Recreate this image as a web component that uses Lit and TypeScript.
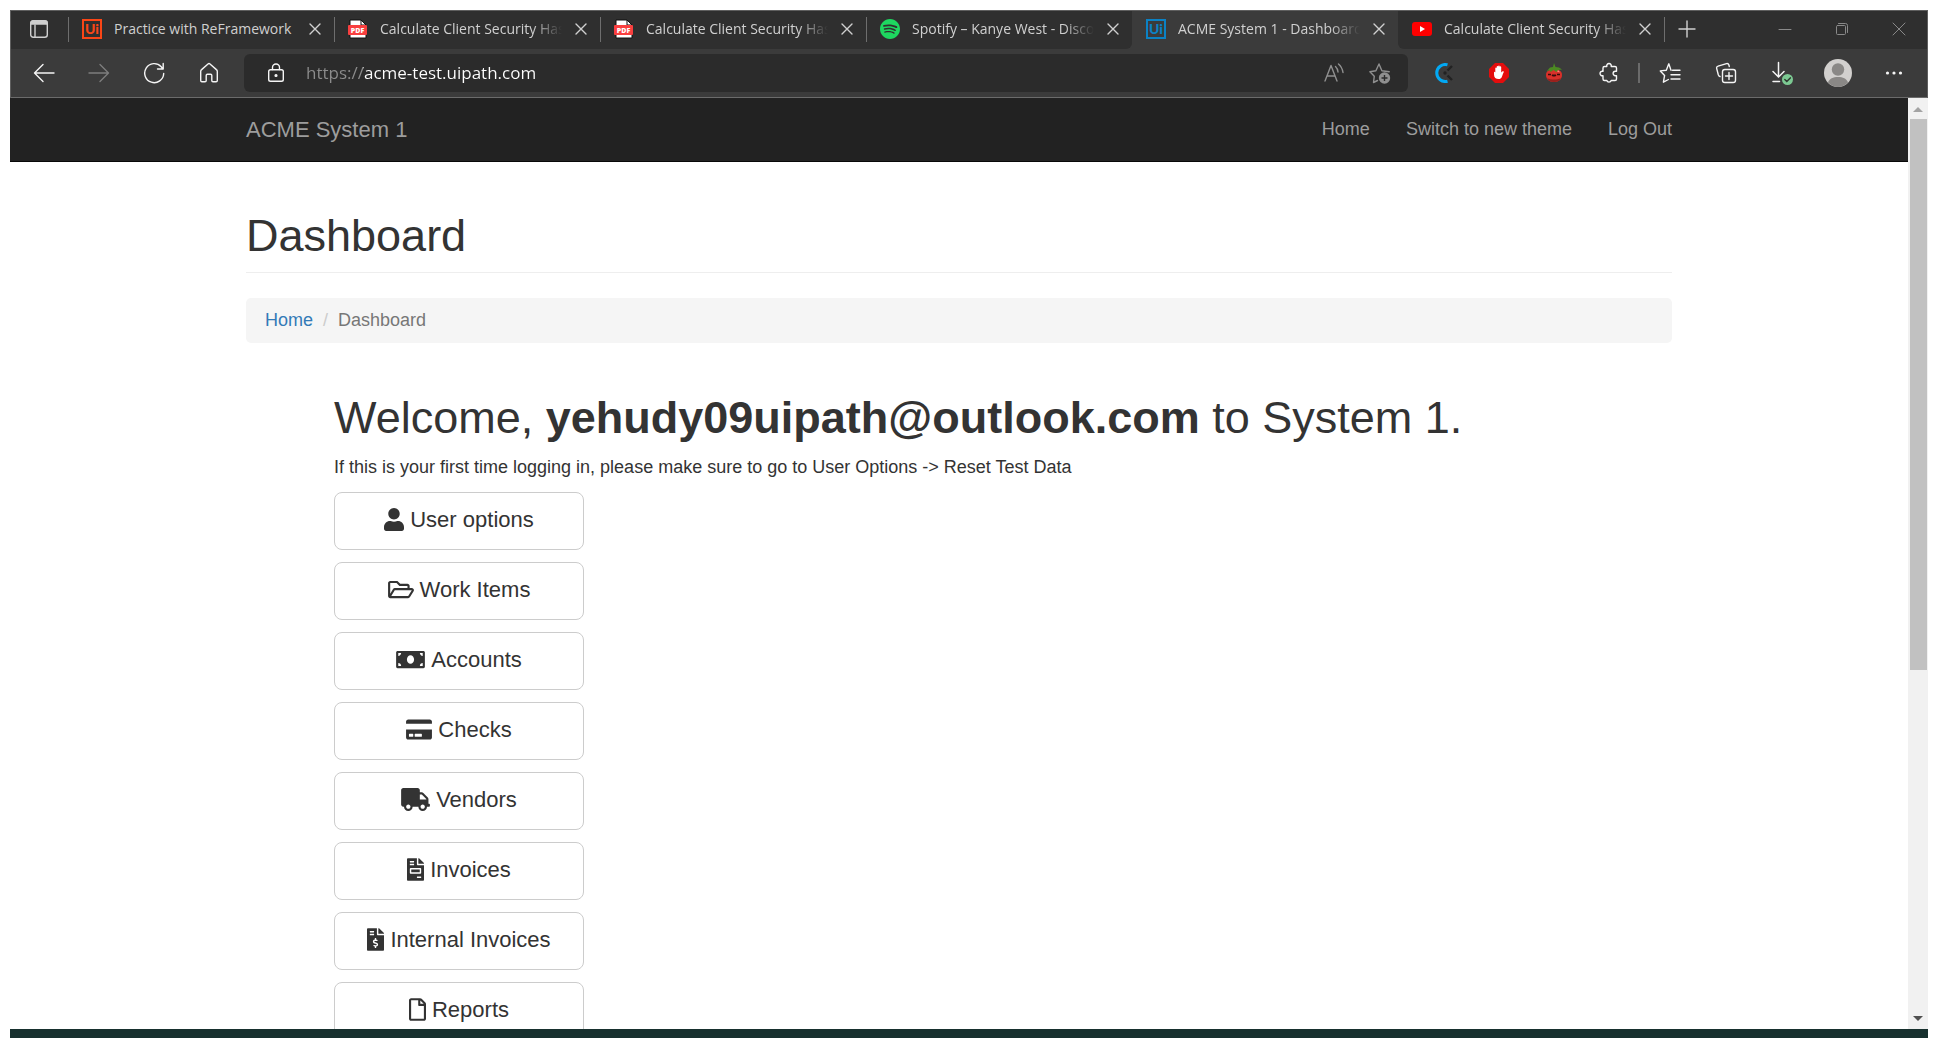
import { LitElement, html, css, svg, nothing, type TemplateResult } from "lit";
import { customElement, property } from "lit/decorators.js";
import { classMap } from "lit/directives/class-map.js";

/* ---------- favicons ---------- */

const uiLogo = (color: string) => html`
  <svg width="20" height="20" viewBox="0 0 20 20" aria-hidden="true">
    <rect x="1" y="1" width="18" height="18" fill="none" stroke=${color} stroke-width="2" />
    <text x="10" y="15" text-anchor="middle" font-family="Lato, sans-serif" font-weight="900" font-size="14" fill=${color}>Ui</text>
  </svg>
`;

const pdfLogo = html`
  <svg width="20" height="20" viewBox="0 0 20 20" aria-hidden="true">
    <path d="M2 1h11l5 5v13H2z" fill="#fff" stroke="#111" />
    <path d="M13 1v5h5z" fill="#fff" stroke="#111" />
    <rect x="0" y="6" width="19" height="10" rx="1" fill="#f93f3f" />
    <text x="9.5" y="14" text-anchor="middle" font-family="Open Sans, sans-serif" font-weight="800" font-size="7" fill="#fff">PDF</text>
  </svg>
`;

const spotifyLogo = html`
  <svg width="20" height="20" viewBox="0 0 24 24" aria-hidden="true">
    <path fill="#1ed760" d="M12 0C5.4 0 0 5.4 0 12s5.4 12 12 12 12-5.4 12-12S18.66 0 12 0zm5.521 17.34c-.24.359-.66.48-1.021.24-2.82-1.74-6.36-2.101-10.561-1.141-.418.122-.779-.179-.899-.539-.12-.421.18-.78.54-.9 4.56-1.021 8.52-.6 11.64 1.32.42.18.479.659.301 1.02zm1.44-3.3c-.301.42-.841.6-1.262.3-3.239-1.98-8.159-2.58-11.939-1.38-.479.12-1.02-.12-1.14-.6-.12-.48.12-1.021.6-1.141C9.6 9.9 15 10.561 18.72 12.84c.361.181.54.78.241 1.2zm.12-3.36C15.24 8.4 8.82 8.16 5.16 9.301c-.6.179-1.2-.181-1.38-.721-.18-.601.18-1.2.72-1.381 4.26-1.26 11.28-1.02 15.721 1.621.539.3.719 1.02.419 1.56-.299.421-1.02.599-1.559.3z" />
  </svg>
`;

const youtubeLogo = html`
  <svg width="20" height="20" viewBox="0 0 20 20" aria-hidden="true">
    <rect x="0" y="3" width="20" height="14" rx="3" fill="#f00" />
    <path d="M8 7l5 3-5 3z" fill="#fff" />
  </svg>
`;

/* ---------- toolbar icons, drawn with strokes ---------- */

const stroke = (size: number, body: TemplateResult) => html`
  <svg width=${size} height=${size} viewBox="0 0 ${size} ${size}" fill="none" stroke="currentColor"
    stroke-width="1.4" stroke-linecap="round" stroke-linejoin="round" aria-hidden="true">${body}</svg>
`;

const closeIcon = stroke(12, svg`<path d="M1 1l10 10M11 1L1 11" />`);
const tabActionsIcon = stroke(20, svg`
  <rect x="1.7" y="1.7" width="16.6" height="16.6" rx="2.5" />
  <path d="M2 5V4a2 2 0 0 1 2-2h12a2 2 0 0 1 2 2v1z" fill="currentColor" /><path d="M6 6v12" />`);
const plusIcon = stroke(18, svg`<path d="M9 1v16M1 9h16" />`);
const backIcon = stroke(22, svg`<path d="M21 11H2M10 2.5L1.5 11l8.500 8.500" />`);
const forwardIcon = stroke(22, svg`<path d="M1 11h19M12 2.500L20.500 11 12 19.500" />`);
const refreshIcon = stroke(22, svg`<path d="M20.700 11.500A9.500 9.500 0 1 1 18.200 4.700l1.800 2.300M20.200 1.500V7H14.500" />`);
const homeIcon = stroke(22, svg`
  <path d="M2.700 9.500c0-.8.3-1.400.9-1.900L10 2c.6-.5 1.400-.5 2 0l6.400 5.600c.6.500.9 1.100.9 1.900v9c0 .8-.5 1.300-1.300 1.300h-3c-.7 0-1.200-.5-1.200-1.200V13.500c0-.7-.5-1.200-1.200-1.200h-3.200c-.7 0-1.200.5-1.200 1.200v5.100c0 .7-.5 1.200-1.200 1.200H4c-.8 0-1.300-.5-1.300-1.300z" />`);
const lockIcon = stroke(20, svg`
  <rect x="2.700" y="6.700" width="14.600" height="11.600" rx="1.800" />
  <path d="M6.500 6.500V4.500a3.500 3.500 0 0 1 7 0v2" /><circle cx="10" cy="12.500" r=".9" fill="currentColor" />`);
const readAloudIcon = stroke(22, svg`
  <path d="M2 19L8 3.500 14 19M4 14h8M12.500 4.500c1.500 1.400 2.300 3.200 2.500 5.500M15.500 2c2.500 2.200 4 5 4.500 8.500" />`);
const addFavoriteIcon = html`
  <svg width="22" height="22" viewBox="0 0 22 22" fill="none" stroke="currentColor" stroke-width="1.4" stroke-linejoin="round" aria-hidden="true">
    <path d="M8.500 18.500l-4 2 .8-6.300-4.400-4.500 6-1L10 2l2.900 6.700 7.300 1" stroke-linecap="round" />
    <circle cx="15.500" cy="16" r="5.700" fill="currentColor" stroke="none" />
    <path d="M15.500 13v6M12.500 16h6" stroke="#2b2b2b" />
  </svg>
`;
const clockifyIcon = html`
  <svg width="20" height="20" viewBox="0 0 20 20" fill="none" aria-hidden="true">
    <path d="M13.500 1.800A8.500 8.500 0 1 0 13.500 18.200" stroke="#03a9f4" stroke-width="3" />
    <circle cx="11" cy="10" r="1.700" fill="#222" />
    <path d="M13.500 7.500l4.500-4.500M13.500 12.500l4.500 4.500" stroke="#222" stroke-width="2.400" />
  </svg>
`;
const blockerIcon = html`
  <svg width="20" height="20" viewBox="0 0 20 20" aria-hidden="true">
    <path d="M6 0h8l6 6v8l-6 6H6l-6-6V6z" fill="#e40d0d" />
    <path d="M5 9.500c0-1 1.200-1 1.300 0V5.200c0-1 1.400-1 1.400 0V3.700c0-1 1.500-1 1.500 0v-.4c0-1 1.500-1 1.500 0v.8c0-1 1.500-1 1.500 0v5.400l1-.9c.8-.8 2-.2 1.500.7-1 1.700-1.200 3.500-2 4.900-.6 1.200-1.500 1.800-3 1.800-3 0-4.700-1.300-4.700-4.500z" fill="#fff" />
  </svg>
`;
const tomatoIcon = html`
  <svg width="20" height="20" viewBox="0 0 20 20" aria-hidden="true">
    <path d="M2 12c0-4 3-5.500 8-5.500s8 1.500 8 5.500-3 7-8 7-8-3-8-7z" fill="#d9302a" />
    <path d="M3 15c1.500 3 4 4 7 4s5.500-1 7-4c-4 2-10 2-14 0z" fill="#99201c" />
    <path d="M2.500 8.500L6 4.500l3-.5 1-4 1.500 4 3.500.5 3 2-4 .5-1.500 2-3-2-3 2-1-2z" fill="#4c8a22" />
    <path d="M12.500 8l2.500-.5.500 2z" fill="#ff8d80" />
    <path d="M4 11.500h3M8 13l1-1 1 1 1-1 1 1M13 11.500h3" stroke="#3a0d0b" stroke-width="1.300" fill="none" />
  </svg>
`;
const puzzleIcon = stroke(22, svg`
  <path d="M6.500 4.500h2.300a2.300 2.300 0 1 1 4.400 0H17a1.500 1.500 0 0 1 1.500 1.500v3.300h-1.200a2.200 2.200 0 1 0 0 4.400h1.200V17a1.500 1.500 0 0 1-1.500 1.500h-3.800a2.300 2.300 0 0 1-4.400 0H6.500A1.500 1.500 0 0 1 5 17v-3.300a2.300 2.300 0 1 1 0-4.400V6a1.500 1.500 0 0 1 1.500-1.500z" />`);
const favoritesIcon = stroke(22, svg`
  <path d="M12 8.300L9.800 1.800 7.300 8.200l-6 .7 4.300 4.500-1.200 6.800 5-2.700M13.500 8.300h7.500M12 12.700h9M12 17h9" />`);
const collectionsIcon = stroke(22, svg`
  <path d="M5 14.500c-1-.2-1.400-.8-1.700-1.800L1.700 6.600c-.3-1.200.2-2.200 1.400-2.500l8.400-2.500c1.200-.3 2 .2 2.400 1.400l.4 1.500" />
  <rect x="7.500" y="7.500" width="13" height="13" rx="2.300" /><path d="M14 10.500v7M10.500 14h7" />`);
const downloadsIcon = html`
  <svg width="24" height="24" viewBox="0 0 24 24" fill="none" stroke="currentColor" stroke-width="1.500" stroke-linecap="round" aria-hidden="true">
    <path d="M8.500 1.500v14M3 10.500l5.500 5.500 5.500-5.500M3 20.500h6.500" />
    <circle cx="17.500" cy="18.500" r="5.500" fill="#7cc992" stroke="none" />
    <path d="M14.800 18.500l2 2 3.500-3.600" stroke="#2f3a32" />
  </svg>
`;
const profileIcon = html`
  <svg width="28" height="28" viewBox="0 0 28 28" aria-hidden="true">
    <circle cx="14" cy="14" r="14" fill="#d2d0ce" />
    <circle cx="14" cy="10.500" r="6.200" fill="#8a8886" />
    <path d="M4 23.500c1.500-4 5-5.500 10-5.500s8.500 1.500 10 5.500A14 14 0 0 1 14 28 14 14 0 0 1 4 23.500z" fill="#8a8886" />
  </svg>
`;
const moreIcon = html`
  <svg width="20" height="20" viewBox="0 0 20 20" fill="currentColor" aria-hidden="true">
    <circle cx="3.500" cy="10" r="1.600" /><circle cx="10" cy="10" r="1.600" /><circle cx="16.500" cy="10" r="1.600" />
  </svg>
`;
const minimizeIcon = stroke(14, svg`<path d="M1 7.500h12" stroke-width="1" />`);
const restoreIcon = stroke(14, svg`
  <rect x="1.500" y="3.500" width="9" height="9" rx="1" stroke-width="1" />
  <path d="M3.500 1.500h7a2 2 0 0 1 2 2v7" stroke-width="1" />`);
const quitIcon = stroke(14, svg`<path d="M1 1l12 12M13 1L1 13" stroke-width="1" />`);

/* ---------- dashboard icons ---------- */

const glyph = (width: number, viewWidth: number, d: string) => html`
  <svg class="glyph" width=${width} height="23" viewBox="0 0 ${viewWidth} 512" fill="currentColor" aria-hidden="true"><path d=${d} /></svg>
`;

interface DashboardItem {
  label: string;
  icon: TemplateResult;
}

const dashboardItems: DashboardItem[] = [
  { label: "User options", icon: glyph(20, 448, "M224 256c70.7 0 128-57.3 128-128S294.7 0 224 0 96 57.3 96 128s57.3 128 128 128zm89.6 32h-16.7c-22.2 10.2-46.9 16-72.9 16s-50.6-5.8-72.9-16h-16.7C60.2 288 0 348.2 0 422.4V464c0 26.5 21.5 48 48 48h352c26.5 0 48-21.5 48-48v-41.6c0-74.2-60.2-134.4-134.4-134.4z") },
  { label: "Work Items", icon: glyph(26, 576, "M527.9 224H480v-48c0-26.5-21.5-48-48-48H272l-64-64H48C21.5 64 0 85.5 0 112v288c0 26.5 21.5 48 48 48h400c16.5 0 31.9-8.5 40.7-22.6l79.9-128c20-31.9-3-73.4-40.7-73.4zM48 118c0-3.3 2.7-6 6-6h134.1l64 64H426c3.300 0 6 2.700 6 6v42H152c-16.800 0-32.400 8.800-41.100 23.200L48 351.400zm400 282H72l77.200-128H528z") },
  { label: "Accounts", icon: glyph(29, 640, "M608 64H32C14.330 64 0 78.330 0 96v320c0 17.670 14.330 32 32 32h576c17.670 0 32-14.330 32-32V96c0-17.670-14.330-32-32-32zM48 400v-64c35.350 0 64 28.650 64 64H48zm0-224v-64h64c0 35.350-28.650 64-64 64zm272 176c-44.190 0-80-42.990-80-96 0-53.020 35.820-96 80-96s80 42.980 80 96c0 53.030-35.830 96-80 96zm272 48h-64c0-35.350 28.650-64 64-64v64zm0-224c-35.350 0-64-28.650-64-64h64v64z") },
  { label: "Checks", icon: glyph(26, 576, "M0 432c0 26.5 21.5 48 48 48h480c26.5 0 48-21.5 48-48V256H0v176zm192-68c0-6.6 5.4-12 12-12h136c6.6 0 12 5.4 12 12v40c0 6.6-5.4 12-12 12H204c-6.6 0-12-5.4-12-12v-40zm-128 0c0-6.6 5.4-12 12-12h72c6.6 0 12 5.4 12 12v40c0 6.6-5.4 12-12 12H76c-6.6 0-12-5.4-12-12v-40zM576 80v48H0V80c0-26.5 21.5-48 48-48h480c26.5 0 48 21.5 48 48z") },
  { label: "Vendors", icon: glyph(29, 640, "M624 352h-16V243.9c0-12.7-5.1-24.9-14.1-33.9L494 110.1c-9-9-21.2-14.1-33.9-14.1H416V48c0-26.5-21.5-48-48-48H48C21.5 0 0 21.5 0 48v320c0 26.5 21.5 48 48 48h16c0 53 43 96 96 96s96-43 96-96h128c0 53 43 96 96 96s96-43 96-96h48c8.8 0 16-7.2 16-16v-32c0-8.8-7.2-16-16-16zM160 464c-26.5 0-48-21.5-48-48s21.5-48 48-48 48 21.5 48 48-21.5 48-48 48zm320 0c-26.5 0-48-21.5-48-48s21.5-48 48-48 48 21.5 48 48-21.5 48-48 48zm80-208H416V144h44.1l99.9 99.9V256z") },
  { label: "Invoices", icon: glyph(17, 384, "M288 256H96v64h192v-64zm89-151L279.1 7c-4.5-4.5-10.6-7-17-7H256v128h128v-6.1c0-6.3-2.5-12.4-7-16.9zm-153 31V0H24C10.7 0 0 10.7 0 24v464c0 13.3 10.7 24 24 24h336c13.3 0 24-10.7 24-24V160H248c-13.2 0-24-10.8-24-24zM64 72c0-4.42 3.58-8 8-8h80c4.42 0 8 3.58 8 8v16c0 4.42-3.58 8-8 8H72c-4.42 0-8-3.58-8-8V72zm0 64c0-4.42 3.58-8 8-8h80c4.42 0 8 3.58 8 8v16c0 4.42-3.58 8-8 8H72c-4.42 0-8-3.58-8-8v-16zm256 304c0 4.42-3.58 8-8 8h-80c-4.42 0-8-3.58-8-8v-16c0-4.42 3.58-8 8-8h80c4.42 0 8 3.58 8 8v16zm0-200v96c0 8.84-7.16 16-16 16H80c-8.84 0-16-7.16-16-16v-96c0-8.84 7.16-16 16-16h224c8.84 0 16 7.16 16 16z") },
  { label: "Internal Invoices", icon: glyph(17, 384, "M377 105L279.1 7c-4.5-4.5-10.6-7-17-7H256v128h128v-6.1c0-6.3-2.5-12.4-7-16.9zm-153 31V0H24C10.7 0 0 10.7 0 24v464c0 13.3 10.7 24 24 24h336c13.3 0 24-10.7 24-24V160H248c-13.2 0-24-10.8-24-24zM64 72c0-4.42 3.58-8 8-8h80c4.42 0 8 3.58 8 8v16c0 4.42-3.58 8-8 8H72c-4.42 0-8-3.58-8-8V72zm0 80v-16c0-4.42 3.58-8 8-8h80c4.42 0 8 3.58 8 8v16c0 4.42-3.58 8-8 8H72c-4.42 0-8-3.58-8-8zm144 263.88V440c0 4.42-3.58 8-8 8h-16c-4.42 0-8-3.58-8-8v-24.29c-11.29-.58-22.27-4.52-31.37-11.35-3.9-2.93-4.1-8.77-.57-12.14l11.75-11.21c2.77-2.64 6.89-2.76 10.13-.73 3.87 2.42 8.26 3.72 12.82 3.72h28.11c6.5 0 11.8-5.92 11.8-13.19 0-5.95-3.61-11.19-8.77-12.73l-45-13.5c-18.59-5.58-31.58-23.42-31.58-43.39 0-24.52 19.05-44.44 42.67-45.07V232c0-4.42 3.58-8 8-8h16c4.42 0 8 3.58 8 8v24.29c11.29.58 22.27 4.51 31.37 11.35 3.9 2.93 4.1 8.77.57 12.14l-11.75 11.21c-2.77 2.64-6.89 2.76-10.13.73-3.87-2.43-8.26-3.72-12.82-3.72h-28.11c-6.5 0-11.8 5.92-11.8 13.19 0 5.95 3.61 11.19 8.77 12.73l45 13.5c18.59 5.58 31.58 23.42 31.58 43.39 0 24.53-19.05 44.44-42.67 45.07z") },
  { label: "Reports", icon: glyph(17, 384, "M369.9 97.9L286 14C277 5 264.8-.1 252.1-.1H48C21.5 0 0 21.5 0 48v416c0 26.5 21.5 48 48 48h288c26.5 0 48-21.5 48-48V131.9c0-12.7-5.1-25-14.1-34zM332.1 128H256V51.9l76.1 76.1zM48 464V48h160v104c0 13.3 10.7 24 24 24h104v288H48z") },
];

/* ---------- browser chrome ---------- */

interface TabInfo {
  title: string;
  icon: TemplateResult;
  active?: boolean;
}

const tabs: TabInfo[] = [
  { title: "Practice with ReFramework", icon: uiLogo("#fa4616") },
  { title: "Calculate Client Security Has", icon: pdfLogo },
  { title: "Calculate Client Security Has", icon: pdfLogo },
  { title: "Spotify – Kanye West - Disco", icon: spotifyLogo },
  { title: "ACME System 1 - Dashboard", icon: uiLogo("#0b82c5"), active: true },
  { title: "Calculate Client Security Has", icon: youtubeLogo },
];

const buttonReset = css`
  button {
    appearance: none;
    border: 0;
    margin: 0;
    padding: 0;
    background: none;
    color: inherit;
    font: inherit;
    display: flex;
    align-items: center;
    justify-content: center;
  }
  svg {
    display: block;
    flex: none;
  }
`;

@customElement("tab-strip")
export class TabStrip extends LitElement {
  static styles = [
    buttonReset,
    css`
      :host {
        display: flex;
        height: 38px;
        background: #3b3b3b;
        color: #d0d0d0;
        font: 14px/20px "Open Sans", "Noto Sans", sans-serif;
      }
      .actions {
        flex: none;
        width: 57px;
        padding: 0 2px 2px 0;
        background: #2f2f2f;
      }
      .tabs {
        display: flex;
        min-width: 0;
        flex: 0 1 1596px;
      }
      .tab {
        flex: 1 1 0;
        min-width: 0;
        box-sizing: border-box;
        display: flex;
        align-items: center;
        padding-bottom: 2px;
        background: #2f2f2f;
      }
      .tab::before {
        content: "";
        flex: none;
        width: 1px;
        height: 25px;
        background: #6e6e6e;
      }
      .active::before,
      .active + .tab::before {
        background: none;
      }
      .active {
        background: #3b3b3b;
      }
      .before-active {
        border-bottom-right-radius: 6px;
      }
      .active + .tab {
        border-bottom-left-radius: 6px;
      }
      .tab .select {
        flex: 1;
        min-width: 0;
        height: 100%;
        justify-content: flex-start;
        gap: 12px;
        padding-left: 13px;
      }
      .title {
        flex: 1;
        min-width: 0;
        text-align: left;
        overflow: hidden;
        white-space: nowrap;
      }
      .fades {
        mask-image: linear-gradient(to right, #000 calc(100% - 30px), transparent);
      }
      .close {
        flex: none;
        width: 38px;
        height: 100%;
      }
      .rest {
        flex: 1;
        box-sizing: border-box;
        display: flex;
        align-items: center;
        padding-bottom: 2px;
        background: #2f2f2f;
      }
      .divider {
        width: 1px;
        height: 25px;
        background: #6e6e6e;
      }
      .new-tab {
        width: 44px;
        height: 100%;
      }
      .window {
        display: flex;
        height: 100%;
        margin-left: auto;
        color: #8a8a8a;
      }
      .window button {
        width: 57px;
        height: 100%;
      }
    `,
  ];

  render() {
    return html`
      <button class="actions" aria-label="Tab actions menu">${tabActionsIcon}</button>
      <div class="tabs">
        ${tabs.map(
          (tab, i) => html`
            <div class=${classMap({ tab: true, active: !!tab.active, "before-active": !!tabs[i + 1]?.active })}>
              <button class="select" aria-current=${tab.active ? "page" : nothing}>
                ${tab.icon}<span class=${classMap({ title: true, fades: i > 0 })}>${tab.title}</span>
              </button>
              <button class="close" aria-label="Close tab">${closeIcon}</button>
            </div>
          `
        )}
      </div>
      <div class="rest">
        <span class="divider"></span>
        <button class="new-tab" aria-label="New tab">${plusIcon}</button>
        <div class="window">
          <button aria-label="Minimize">${minimizeIcon}</button>
          <button aria-label="Restore">${restoreIcon}</button>
          <button aria-label="Close window">${quitIcon}</button>
        </div>
      </div>
    `;
  }
}

@customElement("address-toolbar")
export class AddressToolbar extends LitElement {
  static styles = [
    buttonReset,
    css`
      :host {
        display: flex;
        align-items: center;
        height: 48px;
        padding: 0 5px;
        background: #3b3b3b;
        color: #f5f5f5;
        border-bottom: 1px solid #6b6b6b;
      }
      .tool {
        flex: none;
        width: 55px;
        height: 38px;
      }
      .divider ~ .tool {
        width: 56px;
      }
      .tool:disabled {
        color: #7d7d7d;
      }
      .address {
        flex: 1;
        min-width: 0;
        display: flex;
        align-items: center;
        height: 38px;
        margin: 0 8px;
        background: #2b2b2b;
        border-radius: 6px;
      }
      .lock {
        width: 62px;
        height: 100%;
        padding-left: 2px;
      }
      .url {
        flex: 1;
        min-width: 0;
        border: 0;
        padding: 0;
        outline: none;
        font: 17px/24px "Open Sans", "Noto Sans", sans-serif;
        background: linear-gradient(to right, #8c8c8c 57px, #fff 57px);
        background-clip: text;
        color: transparent;
        caret-color: #fff;
      }
      .inline {
        width: 46px;
        height: 100%;
        color: #8f8f8f;
      }
      .inline:last-child {
        margin-right: 5px;
      }
      .divider {
        width: 2px;
        height: 20px;
        margin: 0 2px;
        background: #6b6b6b;
      }
    `,
  ];

  private tool(label: string, icon: TemplateResult, disabled = false) {
    return html`<button class="tool" aria-label=${label} ?disabled=${disabled}>${icon}</button>`;
  }

  render() {
    return html`
      ${this.tool("Back", backIcon)} ${this.tool("Forward", forwardIcon, true)}
      ${this.tool("Refresh", refreshIcon)} ${this.tool("Home", homeIcon)}
      <div class="address">
        <button class="lock" aria-label="View site information">${lockIcon}</button>
        <input class="url" type="text" aria-label="Address" spellcheck="false" .value=${"https://acme-test.uipath.com"} />
        <button class="inline" aria-label="Read aloud">${readAloudIcon}</button>
        <button class="inline" aria-label="Add to favorites">${addFavoriteIcon}</button>
      </div>
      ${this.tool("Time tracker", clockifyIcon)} ${this.tool("Ad blocker", blockerIcon)}
      ${this.tool("Pomodoro", tomatoIcon)} ${this.tool("Extensions", puzzleIcon)}
      <span class="divider"></span>
      ${this.tool("Favorites", favoritesIcon)} ${this.tool("Collections", collectionsIcon)}
      ${this.tool("Downloads", downloadsIcon)} ${this.tool("Profile", profileIcon)}
      ${this.tool("Settings and more", moreIcon)}
    `;
  }
}

/* ---------- page ---------- */

@customElement("nav-header")
export class NavHeader extends LitElement {
  static styles = css`
    :host {
      display: block;
      background: #222;
      border-bottom: 1px solid #080808;
    }
    .bar {
      box-sizing: border-box;
      width: calc(100% - 40px);
      max-width: 1426px;
      height: 63px;
      margin: 0 auto;
      display: flex;
      align-items: center;
      justify-content: space-between;
    }
    a {
      color: #9d9d9d;
      text-decoration: none;
    }
    .brand {
      font-size: 22px;
    }
    .links {
      display: flex;
      gap: 36px;
    }
  `;

  render() {
    return html`
      <nav class="bar">
        <a class="brand" href="#">ACME System 1</a>
        <div class="links">
          <a href="#">Home</a>
          <a href="#">Switch to new theme</a>
          <a href="#">Log Out</a>
        </div>
      </nav>
    `;
  }
}

@customElement("dashboard-page")
export class DashboardPage extends LitElement {
  @property() user = "";

  static styles = css`
    :host {
      display: block;
      width: calc(100% - 40px);
      max-width: 1426px;
      margin: 0 auto;
    }
    h1,
    p {
      margin: 0;
      font-weight: 400;
    }
    h1 {
      font-size: 45px;
      line-height: 50px;
    }
    .page-header {
      padding: 49px 0 11px;
      border-bottom: 1px solid #eee;
    }
    .breadcrumb {
      display: flex;
      gap: 10px;
      margin-top: 25px;
      padding: 10px 19px;
      border-radius: 5px;
      background: #f5f5f5;
      color: #777;
    }
    .breadcrumb a {
      color: #337ab7;
      text-decoration: none;
    }
    .slash {
      color: #ccc;
    }
    .content {
      display: flex;
      flex-direction: column;
      align-items: flex-start;
      gap: 12px;
      padding: 50px 88px 40px;
    }
    .entry {
      appearance: none;
      box-sizing: border-box;
      display: flex;
      align-items: center;
      justify-content: center;
      gap: 6px;
      width: 250px;
      height: 58px;
      padding: 0 0 3px;
      border: 1px solid #ccc;
      border-radius: 8px;
      background: #fff;
      color: #333;
      font: inherit;
      font-size: 22px;
      white-space: nowrap;
    }
    .glyph {
      display: block;
      flex: none;
    }
  `;

  render() {
    return html`
      <header class="page-header"><h1>Dashboard</h1></header>
      <nav class="breadcrumb" aria-label="Breadcrumb">
        <a href="#">Home</a><span class="slash">/</span><span>Dashboard</span>
      </nav>
      <section class="content">
        <h1>Welcome, <b>${this.user}</b> to System 1.</h1>
        <p>If this is your first time logging in, please make sure to go to User Options -> Reset Test Data</p>
        ${dashboardItems.map((item) => html`<button class="entry">${item.icon}<span>${item.label}</span></button>`)}
      </section>
    `;
  }
}

@customElement("app-root")
export class AppRoot extends LitElement {
  static styles = css`
    :host {
      box-sizing: border-box;
      display: flex;
      flex-direction: column;
      height: 100vh;
      padding: 10px 10px 0;
      overflow: hidden;
      background: #fff;
      color: #333;
      font: 18px/25px "Liberation Sans", Arial, sans-serif;
    }
    .chrome {
      flex: none;
      border: 1px solid #5f5f5f;
      border-bottom: 0;
    }
    .viewport {
      flex: 1;
      min-height: 0;
      display: flex;
    }
    .page {
      flex: 1;
      min-width: 0;
      overflow: hidden;
    }
    .scrollbar {
      flex: none;
      width: 20px;
      display: flex;
      flex-direction: column;
      background: #f1f1f1;
    }
    .scrollbar svg {
      display: block;
      flex: none;
    }
    .track {
      flex: 1;
      padding: 0 1px 0 2px;
    }
    .thumb {
      height: 62%;
      background: #c1c1c1;
    }
    .desktop {
      flex: none;
      height: 9px;
      background: #17302e;
    }
  `;

  render() {
    return html`
      <div class="chrome">
        <tab-strip></tab-strip>
        <address-toolbar></address-toolbar>
      </div>
      <div class="viewport">
        <main class="page">
          <nav-header></nav-header>
          <dashboard-page user="yehudy09uipath@outlook.com"></dashboard-page>
        </main>
        <div class="scrollbar" aria-hidden="true">
          <svg width="20" height="21" viewBox="0 0 20 21"><path d="M5 14l5-5 5 5z" fill="#a3a3a3" /></svg>
          <div class="track"><div class="thumb"></div></div>
          <svg width="20" height="21" viewBox="0 0 20 21"><path d="M5 8l5 5 5-5z" fill="#505050" /></svg>
        </div>
      </div>
      <div class="desktop"></div>
    `;
  }
}
